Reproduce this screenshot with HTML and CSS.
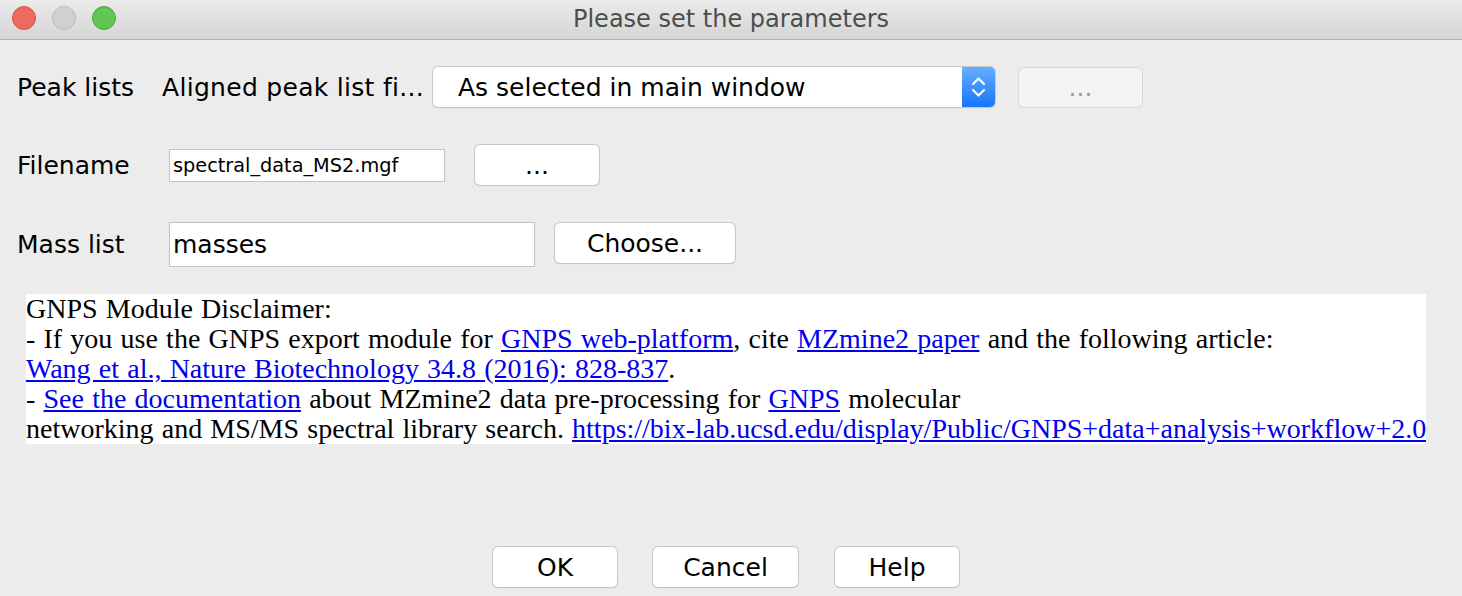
FILE: index.html
```html
<!DOCTYPE html>
<html>
<head>
<meta charset="utf-8">
<link rel="stylesheet" href="styles.css">
</head>
<body>
<div class="window">
  <div class="titlebar">
    <div class="lights">
      <span class="light red"></span>
      <span class="light grey"></span>
      <span class="light green"></span>
    </div>
    <div class="title">Please set the parameters</div>
  </div>
  <div class="content">
    <div class="row row1">
      <div class="label l1">Peak lists</div>
      <div class="sublabel">Aligned peak list fi...</div>
      <div class="combo">
        <span class="combo-text">As selected in main window</span>
        <span class="spinner">
          <svg width="33" height="40" viewBox="0 0 33 40">
            <path d="M11 17 L16.5 11.5 L22 17" fill="none" stroke="#fff" stroke-width="2.2" stroke-linecap="round" stroke-linejoin="round"/>
            <path d="M11 23 L16.5 28.5 L22 23" fill="none" stroke="#fff" stroke-width="2.2" stroke-linecap="round" stroke-linejoin="round"/>
          </svg>
        </span>
      </div>
      <button class="btn btn-dis">...</button>
    </div>
    <div class="row row2">
      <div class="label l2">Filename</div>
      <div class="field small">spectral_data_MS2.mgf</div>
      <button class="btn btn-dots">...</button>
    </div>
    <div class="row row3">
      <div class="label l2">Mass list</div>
      <div class="field big">masses</div>
      <button class="btn btn-choose">Choose...</button>
    </div>
    <div class="disclaimer">
      GNPS Module Disclaimer:<br>
      - If you use the GNPS export module for <a href="#">GNPS web-platform</a>, cite <a href="#">MZmine2 paper</a> and the following article:<br>
      <a href="#">Wang et al., Nature Biotechnology 34.8 (2016): 828-837</a>.<br>
      - <a href="#">See the documentation</a> about MZmine2 data pre-processing for <a href="#">GNPS</a> molecular<br>
      networking and MS/MS spectral library search. <a href="#">https://bix-lab.ucsd.edu/display/Public/GNPS+data+analysis+workflow+2.0</a>
    </div>
    <div class="buttons">
      <button class="btn btn-ok">OK</button>
      <button class="btn btn-cancel">Cancel</button>
      <button class="btn btn-help">Help</button>
    </div>
  </div>
</div>
</body>
</html>
```
FILE: styles.css
```css
html, body {
  margin: 0;
  padding: 0;
  background: #ececec;
}
.window {
  width: 1462px;
  height: 596px;
  background: #ececec;
  font-family: "DejaVu Sans", "Liberation Sans", sans-serif;
  color: #000;
  overflow: hidden;
}
.titlebar {
  height: 39px;
  border-bottom: 1px solid #b4b4b4;
  background: linear-gradient(#ebebeb, #d5d5d5);
  display: flex;
  align-items: center;
  position: relative;
}
.lights {
  display: flex;
  gap: 16px;
  padding-left: 12px;
  margin-top: -3px;
}
.light {
  width: 22px;
  height: 22px;
  border-radius: 50%;
  display: block;
}
.red { background: #ee6a5f; border: 1px solid #d5534a; }
.grey { background: #d0d0d0; border: 1px solid #b9b9b9; }
.green { background: #62c655; border: 1px solid #4ca93f; }
.title {
  position: absolute;
  left: 0;
  right: 0;
  top: 0;
  bottom: 0;
  display: flex;
  align-items: center;
  justify-content: center;
  font-family: "DejaVu Sans", sans-serif;
  font-size: 24px;
  color: #4d4d4d;
  margin-top: -2px;
  padding-left: 0;
}
.content {
  padding: 0 0 0 17px;
}
.row {
  display: flex;
  align-items: center;
}
.label {
  font-size: 25px;
}
.row1 {
  margin-top: 27px;
  height: 40px;
}
.l1 { width: 145px; }
.sublabel {
  font-size: 25px;
  width: 271px;
  white-space: nowrap;
  letter-spacing: 0.3px;
}
.combo {
  width: 562px;
  height: 40px;
  box-sizing: border-box;
  background: #fff;
  border-radius: 5px;
  box-shadow: 0 0 0 1px #c8c8c8, 0 1px 1px rgba(0,0,0,0.25);
  display: flex;
  align-items: center;
  overflow: hidden;
}
.combo-text {
  flex: 1;
  padding-left: 25px;
  font-size: 25px;
}
.spinner {
  width: 33px;
  height: 40px;
  background: linear-gradient(#66aeff, #1776fd);
  display: block;
}
.spinner svg { display: block; }
.btn {
  font-family: "DejaVu Sans", "Liberation Sans", sans-serif;
  font-size: 25px;
  background: #fff;
  border: none;
  border-radius: 5px;
  box-shadow: 0 0 0 1px #c6c6c6, 0 1px 1px rgba(0,0,0,0.2);
  color: #000;
  padding: 0;
  height: 39px;
  box-sizing: border-box;
}
.btn-dis {
  margin-left: 24px;
  width: 123px;
  background: #f4f4f4;
  color: #9a9a9a;
  box-shadow: 0 0 0 1px #d8d8d8;
}
.row2 {
  margin-top: 38px;
  height: 40px;
}
.l2 { width: 152px; }
.field {
  background: #fff;
  border: 1px solid #c2c2c2;
  box-sizing: border-box;
  display: flex;
  align-items: center;
  padding-left: 3px;
}
.field.small {
  width: 276px;
  height: 33px;
  font-size: 19.3px;
}
.btn-dots {
  margin-left: 30px;
  width: 124px;
  height: 40px;
}
.row3 {
  margin-top: 37px;
  height: 45px;
  align-items: flex-start;
}
.row3 .label { align-self: center; }
.field.big {
  width: 366px;
  height: 45px;
  font-size: 25px;
}
.btn-choose {
  margin-left: 20px;
  margin-top: 1px;
  width: 180px;
  height: 40px;
}
.disclaimer {
  margin-top: 27px;
  margin-left: 9px;
  width: 1400px;
  height: 150px;
  background: #fff;
  font-family: "Liberation Serif", serif;
  font-size: 28px;
  line-height: 30px;
  word-spacing: 1.2px;
  white-space: nowrap;
  overflow: hidden;
}
.disclaimer a {
  color: #0000ee;
  text-decoration: underline;
}
.buttons {
  margin-top: 103px;
  display: flex;
  padding-left: 476px;
}
.btn-ok { width: 124px; height: 40px; }
.btn-cancel { width: 145px; height: 40px; margin-left: 36px; }
.btn-help { width: 124px; height: 40px; margin-left: 37px; }
```
